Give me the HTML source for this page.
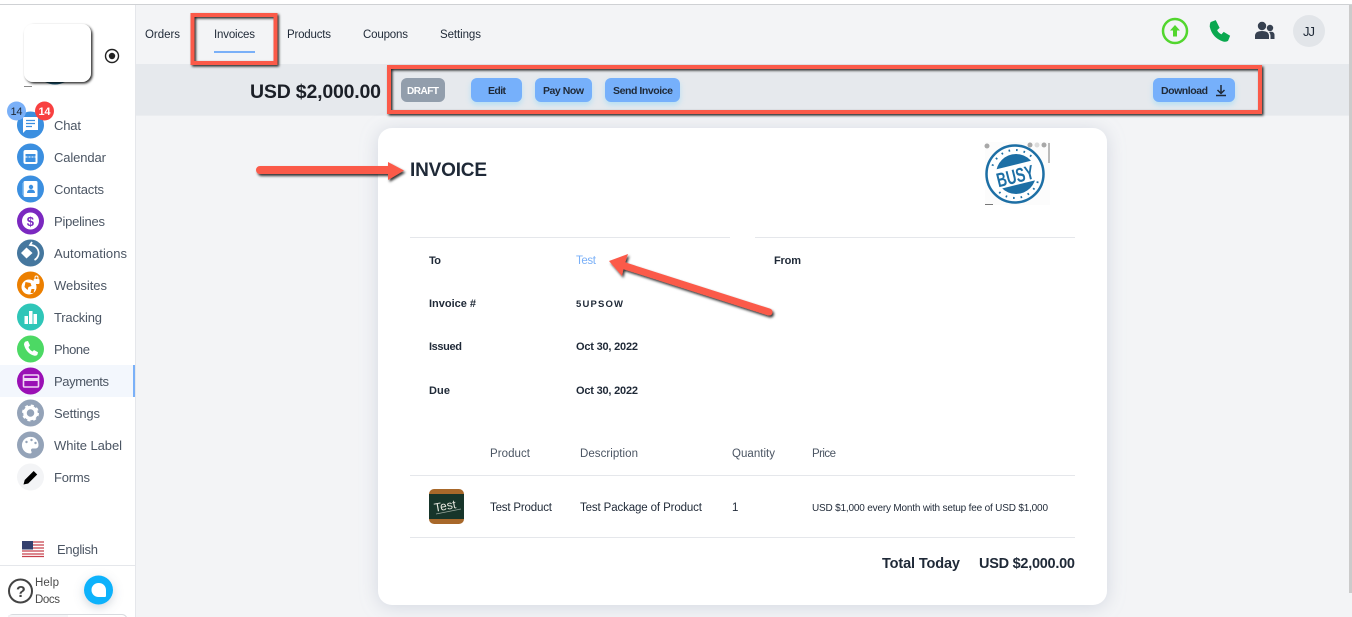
<!DOCTYPE html>
<html>
<head>
<meta charset="utf-8">
<style>
html,body{margin:0;padding:0;width:1352px;height:617px;overflow:hidden;background:#f3f4f6}
svg{display:block}
text{font-family:"Liberation Sans",sans-serif}
.s{font-size:13px;fill:#4b5563}
.t{font-size:11.5px;fill:#1f2937}
.b{font-size:10.5px;font-weight:bold;fill:#1f2937}
.l{font-size:11px;font-weight:bold;fill:#1f2937}
.h{font-size:11.5px;fill:#4b5563}
.r{font-size:11.5px;fill:#1f2937}
</style>
</head>
<body>
<svg width="1352" height="617" viewBox="0 0 1352 617" xmlns="http://www.w3.org/2000/svg">
<defs>
<filter id="sh" x="-20%" y="-20%" width="150%" height="150%"><feDropShadow dx="1.5" dy="1.5" stdDeviation="1.2" flood-color="#000" flood-opacity=".85"/></filter>
<filter id="sa" filterUnits="userSpaceOnUse" x="230" y="130" width="600" height="220"><feDropShadow dx="1.5" dy="2" stdDeviation="1.2" flood-color="#000" flood-opacity=".8"/></filter>
<filter id="card" x="-10%" y="-10%" width="120%" height="120%"><feDropShadow dx="0" dy="2" stdDeviation="9" flood-color="#94a3b8" flood-opacity=".35"/></filter>
<filter id="btn" x="-30%" y="-50%" width="160%" height="220%"><feDropShadow dx="0" dy="3" stdDeviation="3" flood-color="#7dd3fc" flood-opacity=".45"/></filter>
<filter id="chat" x="-50%" y="-50%" width="200%" height="200%"><feDropShadow dx="0" dy="3" stdDeviation="5" flood-color="#64748b" flood-opacity=".3"/></filter>
<clipPath id="thumb"><rect x="429" y="489" width="35" height="35" rx="5"/></clipPath>
<clipPath id="stamp"><circle cx="1015" cy="174" r="26"/></clipPath>
</defs>

<!-- page frame -->
<rect width="1352" height="617" fill="#f3f4f6"/>
<rect width="1352" height="4" fill="#fff"/>
<rect y="4" width="1352" height="1" fill="#cfd1d4"/>
<rect x="1349" y="5" width="3" height="588" fill="#cbcbcb"/>

<!-- band -->
<rect x="136" y="64" width="1213" height="51" fill="#e6e9ed"/>
<rect x="136" y="115" width="1213" height="1" fill="#ebedf0"/>

<!-- sidebar -->
<rect x="0" y="5" width="135" height="612" fill="#fff"/>
<rect x="135" y="5" width="1" height="612" fill="#e5e7eb"/>
<rect x="0" y="365" width="133" height="32" fill="#f3f7fd"/>
<rect x="133" y="365" width="2" height="32" fill="#7ab0f8"/>

<!-- sidebar logo -->
<path d="M45 82q10 5 20 0z" fill="#1f5f7f"/>
<rect x="24" y="86" width="8" height="1" fill="#888"/>
<rect x="24" y="24" width="67" height="58" rx="9" fill="#fff" filter="url(#sh)"/>
<circle cx="112" cy="56" r="6.500" fill="none" stroke="#222" stroke-width="1.400"/>
<circle cx="112" cy="56" r="3.200" fill="#222"/>

<!-- chat -->
<circle cx="30.500" cy="125" r="13.500" fill="#3b8fe0"/>
<path d="M23 117h15v13h-12l-3 3z" fill="#fff"/>
<path d="M26 120.500h9M26 123.500h9M26 126.500h6" stroke="#3b8fe0" stroke-width="1.300"/>
<circle cx="16.500" cy="111" r="9.500" fill="#7ab0f8"/>
<text x="10.500" y="115" font-size="11" fill="#1f2937" textLength="12">14</text>
<circle cx="44.500" cy="111" r="9.500" fill="#f84040"/>
<text x="38.500" y="115" font-size="11" font-weight="bold" fill="#fff" textLength="12">14</text>
<text class="s" x="54" y="130" textLength="27">Chat</text>

<!-- calendar -->
<circle cx="30.500" cy="157" r="13.500" fill="#3b8fe0"/>
<rect x="23.500" y="150" width="14" height="14" rx="2" fill="#fff"/>
<rect x="25.500" y="154" width="10" height="8" fill="#3b8fe0"/>
<path d="M25.500 157h10" stroke="#fff" stroke-width="1" stroke-dasharray="2 1"/>
<text class="s" x="54" y="162" textLength="52">Calendar</text>

<!-- contacts -->
<circle cx="30.500" cy="189" r="13.500" fill="#3b8fe0"/>
<rect x="23.500" y="181" width="14" height="16" rx="1.500" fill="#fff"/>
<rect x="22.500" y="183" width="1.500" height="12" fill="#8cc4f5"/>
<circle cx="31" cy="187" r="2.200" fill="#3b8fe0"/>
<path d="M27 193q0-3.500 4-3.500t4 3.500z" fill="#3b8fe0"/>
<text class="s" x="54" y="194" textLength="50">Contacts</text>

<!-- pipelines -->
<circle cx="30.500" cy="221" r="13.500" fill="#7b28c0"/>
<circle cx="30.500" cy="221" r="8.500" fill="#fff"/>
<text x="26.700" y="226" font-size="13" font-weight="bold" fill="#7b28c0">$</text>
<text class="s" x="54" y="226" textLength="51">Pipelines</text>

<!-- automations -->
<circle cx="30.500" cy="253" r="13.500" fill="#45779e"/>
<path d="M26.500 247.500l6 5.500-6 5.500-5.500-5.500z" fill="#fff"/>
<path d="M30.500 245a8 8 0 0 1 4 15M33.500 245.500l-3.500-.5 2-3" fill="none" stroke="#fff" stroke-width="1.700"/>
<text class="s" x="54" y="258" textLength="73">Automations</text>

<!-- websites -->
<circle cx="30.500" cy="285" r="13.500" fill="#ec7f00"/>
<circle cx="29" cy="287" r="7.500" fill="#fff"/>
<path d="M25.500 282l5 1 1 3-3 1-1 3-3-3zM31.500 289l3 0-1 4-3 0z" fill="#ec7f00"/>
<rect x="33.500" y="279" width="6" height="5" rx="1" fill="#fff"/>
<path d="M35 279v-1.500a1.500 1.500 0 0 1 3 0v1.500" fill="none" stroke="#fff"/>
<text class="s" x="54" y="290" textLength="53">Websites</text>

<!-- tracking -->
<circle cx="30.500" cy="317" r="13.500" fill="#2fc6b8"/>
<path d="M24.500 316h3.500v8h-3.500zM29 311h3.500v13h-3.500zM33.500 314h3.500v10h-3.500z" fill="#fff"/>
<text class="s" x="54" y="322" textLength="48">Tracking</text>

<!-- phone -->
<circle cx="30.500" cy="349" r="13.500" fill="#4cd964"/>
<path d="M25.500 341.500l2.500-.5 2 4.500-1.500 1.500q1 3 4 4.500l1.500-1.500 4 2.200-.5 2.300q-1 1.500-3 1.200-8-2-10.500-11 0-2 1.500-3.200z" fill="#fff"/>
<text class="s" x="54" y="354" textLength="36">Phone</text>

<!-- payments -->
<circle cx="30.500" cy="381" r="13.500" fill="#9a0fb5"/>
<rect x="23.500" y="375" width="15" height="12" rx="1" fill="none" stroke="#f0d4f5" stroke-width="1.600"/>
<rect x="23.500" y="378" width="15" height="3" fill="#f0d4f5"/>
<text class="s" x="54" y="386" textLength="55">Payments</text>

<!-- settings -->
<circle cx="30.500" cy="413" r="13.500" fill="#94a3b8"/>
<circle cx="30.500" cy="413" r="5.500" fill="none" stroke="#fff" stroke-width="3.500"/>
<circle cx="30.500" cy="413" r="7.500" fill="none" stroke="#fff" stroke-width="2" stroke-dasharray="3 2.900"/>
<text class="s" x="54" y="418" textLength="46">Settings</text>

<!-- white label -->
<circle cx="30.500" cy="445" r="13.500" fill="#94a3b8"/>
<path d="M31.500 437a8.300 8.300 0 1 0-1.500 16.500c2 0 1.800-1.500 1.200-2.500-.7-1.500.3-2.500 1.800-2.500h2.500c2 0 3-1.500 3-3.500 0-4.500-3-8-7-8z" fill="#fff"/>
<circle cx="26.500" cy="442" r="1.200" fill="#94a3b8"/><circle cx="31.500" cy="440" r="1.200" fill="#94a3b8"/><circle cx="35.500" cy="443" r="1.200" fill="#94a3b8"/>
<text class="s" x="54" y="450" textLength="68">White Label</text>

<!-- forms -->
<circle cx="30.500" cy="477" r="13.500" fill="#f3f4f6"/>
<path d="M23.500 484.500l1.200-4.500 9-9 3.500 3.500-9 9z" fill="#000"/>
<text class="s" x="54" y="482" textLength="36">Forms</text>

<!-- language -->
<rect x="22" y="541" width="22" height="16" fill="#fff"/>
<path d="M22 542h22M22 545h22M22 548h22M22 551h22M22 554h22M22 556.500h22" stroke="#c8404c" stroke-width="1.300"/>
<rect x="22" y="541" width="11" height="8.500" fill="#34406e"/>
<text class="s" x="57" y="554" textLength="41">English</text>
<rect x="0" y="565" width="135" height="1" fill="#e5e7eb"/>

<!-- help -->
<circle cx="20.500" cy="591" r="11.500" fill="none" stroke="#444" stroke-width="2"/>
<text x="16" y="597" font-size="16" font-weight="bold" fill="#444">?</text>
<text x="35" y="586" font-size="11.500" fill="#4b4b4b" textLength="24">Help</text>
<text x="35" y="603" font-size="11.500" fill="#4b4b4b" textLength="25">Docs</text>
<circle cx="98.500" cy="590" r="14.500" fill="#0db2fb" filter="url(#chat)"/>
<path d="M98.500 583a7 7 0 1 0 0 14h6.500a1 1 0 0 0 1-1v-6a7 7 0 0 0-7.500-7z" fill="#fff"/>
<rect x="8" y="614.500" width="119" height="10" rx="5" fill="#fff" stroke="#d8dbdf"/>
<rect x="8" y="615" width="60" height="10" fill="#f3f4f6" opacity=".8"/>

<!-- tabs -->
<text class="t" x="145" y="38" textLength="35">Orders</text>
<text class="t" x="214" y="38" textLength="41">Invoices</text>
<rect x="214" y="51" width="41" height="2" fill="#7ab0f8"/>
<text class="t" x="287" y="38" textLength="44">Products</text>
<text class="t" x="363" y="38" textLength="45">Coupons</text>
<text class="t" x="440" y="38" textLength="41">Settings</text>

<!-- top-right -->
<circle cx="1175" cy="31" r="12" fill="none" stroke="#52d62e" stroke-width="2.500"/>
<path d="M1175 25l5 5.500h-3v6h-4v-6h-3z" fill="#52d62e"/>
<path d="M1211 22.500l4.500-1.800 3.500 7-2.500 2.300q1.500 3.500 5 5l2.300-2.500 5.700 3.500-1.800 4.500q-1.500 1.200-4.500.5-10.500-3.500-13-14.500 0-2.500.8-4z" fill="#0aa84f" stroke="#0aa84f" stroke-width="1"/>
<circle cx="1262" cy="26" r="4.200" fill="#374151"/>
<circle cx="1270" cy="28" r="3.200" fill="#374151"/>
<path d="M1255 39v-3q0-5 7-5t7 5v3z" fill="#374151"/>
<path d="M1270.500 39v-3.500q0-2-1.500-3.500 5-1.200 5.500 2.500v4.500z" fill="#374151"/>
<circle cx="1309" cy="31" r="16" fill="#e2e5e9"/>
<text x="1303" y="36" font-size="13" fill="#1f2937" textLength="12">JJ</text>

<!-- band contents -->
<text x="250" y="98" font-size="19.500" font-weight="bold" fill="#1b1f27" textLength="131">USD $2,000.00</text>
<rect x="401" y="78" width="44" height="24" rx="6" fill="#929eac"/>
<text x="407" y="94" font-size="10" font-weight="bold" fill="#fff" textLength="32">DRAFT</text>
<rect x="471" y="78" width="51" height="24" rx="6" fill="#76b0fb" filter="url(#btn)"/>
<text class="b" x="488" y="94" textLength="18">Edit</text>
<rect x="535" y="78" width="57" height="24" rx="6" fill="#76b0fb" filter="url(#btn)"/>
<text class="b" x="543" y="94" textLength="41">Pay Now</text>
<rect x="605" y="78" width="75" height="24" rx="6" fill="#76b0fb" filter="url(#btn)"/>
<text class="b" x="613" y="94" textLength="60">Send Invoice</text>
<rect x="1153" y="78" width="82" height="24" rx="6" fill="#76b0fb" filter="url(#btn)"/>
<text class="b" x="1161" y="94" textLength="47">Download</text>
<path d="M1221 85v8M1217.500 90l3.500 3.500 3.500-3.500M1216 95.500h10" fill="none" stroke="#1f2937" stroke-width="1.500"/>

<!-- card -->
<rect x="378" y="128" width="729" height="477" rx="14" fill="#fff" filter="url(#card)"/>
<text x="410" y="176" font-size="19" font-weight="bold" fill="#1f2937" textLength="77">INVOICE</text>

<!-- stamp -->
<rect x="985" y="142" width="65" height="63" fill="#fcfcfc"/>
<circle cx="1015" cy="174" r="28.500" fill="#fff" stroke="#1d6fa5" stroke-width="2.500"/>
<circle cx="1015" cy="174" r="24" fill="none" stroke="#1d6fa5" stroke-width="2" stroke-dasharray="1.600 6"/>
<g clip-path="url(#stamp)">
<ellipse cx="1016" cy="174" rx="20" ry="20" fill="#1d6fa5"/>
<g transform="rotate(-14 1015 175)">
<rect x="985" y="165" width="60" height="20" fill="#fff"/>
<text x="996" y="183" font-size="20" font-weight="bold" fill="#1d6fa5" textLength="38" lengthAdjust="spacingAndGlyphs">BUSY</text>
</g>
</g>
<circle cx="987" cy="146" r="2.500" fill="#a8a8a8"/>
<circle cx="1030" cy="145" r="2.500" fill="#a8a8a8"/>
<circle cx="1037" cy="145" r="2.500" fill="#dcdcdc"/>
<circle cx="1044" cy="145" r="2.500" fill="#a8a8a8"/>
<rect x="1048" y="143" width="2" height="20" fill="#bbb"/>
<rect x="985" y="204" width="8" height="1" fill="#777"/>

<!-- details -->
<rect x="410" y="237" width="320" height="1" fill="#e5e7eb"/>
<rect x="755" y="237" width="320" height="1" fill="#e5e7eb"/>
<text class="l" x="429" y="264" textLength="12">To</text>
<text x="576" y="264" font-size="11.500" fill="#7ab0f8" textLength="20">Test</text>
<text class="l" x="774" y="264" textLength="27">From</text>
<text class="l" x="429" y="307" textLength="47">Invoice #</text>
<text x="576" y="307" font-size="9.500" font-weight="bold" fill="#1f2937" textLength="47">5UPSOW</text>
<text class="l" x="429" y="350" textLength="33">Issued</text>
<text class="l" x="576" y="350" textLength="62">Oct 30, 2022</text>
<text class="l" x="429" y="394" textLength="21">Due</text>
<text class="l" x="576" y="394" textLength="62">Oct 30, 2022</text>

<!-- table -->
<text class="h" x="490" y="457" textLength="40">Product</text>
<text class="h" x="580" y="457" textLength="58">Description</text>
<text class="h" x="732" y="457" textLength="43">Quantity</text>
<text class="h" x="812" y="457" textLength="24">Price</text>
<rect x="410" y="475" width="665" height="1" fill="#e5e7eb"/>

<g clip-path="url(#thumb)">
<rect x="429" y="489" width="35" height="35" fill="#a8682a"/>
<rect x="429" y="494" width="35" height="25" fill="#17352a"/>
<text x="434" y="510" font-size="12" fill="#e8e8e0" transform="rotate(-10 445 506)">Test</text>
<path d="M436 514l25-5" stroke="#9aa89f" stroke-width=".7"/>
</g>

<text class="r" x="490" y="511" textLength="62">Test Product</text>
<text class="r" x="580" y="511" textLength="122">Test Package of Product</text>
<text class="r" x="732" y="511" textLength="5">1</text>
<text x="812" y="511" font-size="10" fill="#1f2937" textLength="236">USD $1,000 every Month with setup fee of USD $1,000</text>
<rect x="410" y="537" width="665" height="1" fill="#e5e7eb"/>
<text x="882" y="568" font-size="14.500" font-weight="bold" fill="#1f2937" textLength="78">Total Today</text>
<text x="979" y="568" font-size="14.500" font-weight="bold" fill="#1f2937" textLength="96">USD $2,000.00</text>

<!-- annotations -->
<rect x="192.500" y="15" width="83" height="48" fill="none" stroke="#fb5a4a" stroke-width="4" filter="url(#sh)"/>
<rect x="389" y="67" width="871" height="45" fill="none" stroke="#fb5a4a" stroke-width="4" filter="url(#sh)"/>
<g filter="url(#sa)">
<path d="M260 166h128v-4l16 8.500-16 9.500v-6H260a3.500 3.500 0 0 1 0-8z" fill="#fb5a4a"/>
</g>
<g filter="url(#sa)">
<path d="M769 312L622 265" stroke="#fb5a4a" stroke-width="7" stroke-linecap="round" fill="none"/>
<path d="M609 261L628 254 624 266 622 276z" fill="#fb5a4a"/>
</g>
</svg>
</body>
</html>
